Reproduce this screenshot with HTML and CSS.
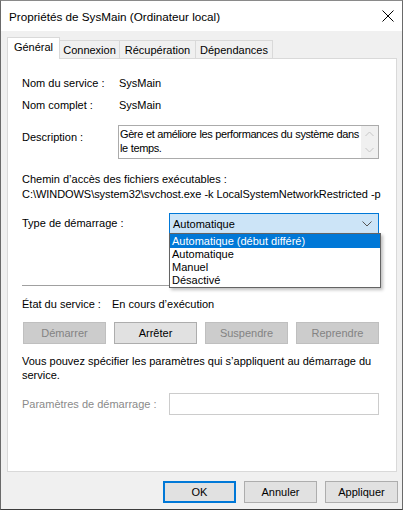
FILE: index.html
```html
<!DOCTYPE html>
<html lang="fr">
<head>
<meta charset="utf-8">
<title>Propriétés de SysMain</title>
<link rel="stylesheet" href="styles.css">
</head>
<body>
<div class="window">
  <div class="titlebar">
    <span class="title">Propriétés de SysMain (Ordinateur local)</span>
    <svg class="close" width="12" height="12" viewBox="0 0 12 12"><path d="M0.5 0.5 L11.5 11.5 M11.5 0.5 L0.5 11.5" stroke="#000" stroke-width="1" fill="none"/></svg>
  </div>
  <div class="client">
    <div class="tabs">
      <div class="tab active t1">Général</div>
      <div class="tab t2">Connexion</div>
      <div class="tab t3">Récupération</div>
      <div class="tab t4">Dépendances</div>
    </div>
    <div class="panel">
      <div class="row r1"><span class="lbl">Nom du service :</span><span class="val">SysMain</span></div>
      <div class="row r2"><span class="lbl">Nom complet :</span><span class="val">SysMain</span></div>
      <div class="row desc">
        <span class="lbl">Description :</span>
        <div class="textarea">
          <div class="ta-text">Gère et améliore les performances du système dans le temps.</div>
          <div class="scroll">
            <svg width="9" height="6" viewBox="0 0 9 6"><path d="M0.5 5 L4.5 1 L8.5 5" stroke="#c6c6c6" fill="none"/></svg>
            <svg width="9" height="6" viewBox="0 0 9 6"><path d="M0.5 1 L4.5 5 L8.5 1" stroke="#c6c6c6" fill="none"/></svg>
          </div>
        </div>
      </div>
      <div class="pathlbl">Chemin d’accès des fichiers exécutables :</div>
      <div class="path">C:\WINDOWS\system32\svchost.exe -k LocalSystemNetworkRestricted -p</div>
      <div class="row type">
        <span class="lbl2">Type de démarrage :</span>
        <div class="combo-wrap">
          <div class="combo">
            <span>Automatique</span>
            <svg width="10" height="6" viewBox="0 0 10 6"><path d="M0.5 0.5 L5 5 L9.5 0.5" stroke="#555" fill="none"/></svg>
          </div>
          <ul class="dropdown">
            <li class="sel">Automatique (début différé)</li>
            <li>Automatique</li>
            <li>Manuel</li>
            <li>Désactivé</li>
          </ul>
        </div>
      </div>
      <div class="sep"></div>
      <div class="row etat"><span class="lbl3">État du service :</span><span>En cours d’exécution</span></div>
      <div class="svc-buttons">
        <button class="btn" disabled>Démarrer</button>
        <button class="btn">Arrêter</button>
        <button class="btn" disabled>Suspendre</button>
        <button class="btn" disabled>Reprendre</button>
      </div>
      <p class="para">Vous pouvez spécifier les paramètres qui s’appliquent au démarrage du service.</p>
      <div class="row params">
        <span class="lbl2 dim">Paramètres de démarrage :</span>
        <div class="input"></div>
      </div>
    </div>
    <div class="footer">
      <button class="btn2 default">OK</button>
      <button class="btn2">Annuler</button>
      <button class="btn2">Appliquer</button>
    </div>
  </div>
</div>
</body>
</html>
```

FILE: styles.css
```css
* { box-sizing: border-box; }
html, body {
  margin: 0;
  padding: 0;
  background: #ffffff;
}
body {
  font-family: "Liberation Sans", Arial, sans-serif;
  font-size: 11px;
  color: #000;
  width: 406px;
  height: 511px;
  overflow: hidden;
}
.window {
  width: 403px;
  height: 510px;
  border: 1px solid #6a6a6a;
  border-top-color: #8a8a8a;
  border-bottom-color: #3c3c3c;
  display: flex;
  flex-direction: column;
  background: #f0f0f0;
}
.titlebar {
  height: 30px;
  background: #ffffff;
  display: flex;
  align-items: center;
  justify-content: space-between;
  padding: 0 7px 0 8px;
}
.title {
  font-size: 11.7px;
}
.close {
  display: block;
  margin-right: 1px;
}
.client {
  flex: 1;
  padding: 6px 4px 0 6px;
  display: flex;
  flex-direction: column;
}
.tabs {
  display: flex;
  align-items: flex-end;
  height: 21px;
  position: relative;
  z-index: 1;
}
.tab {
  height: 18px;
  line-height: 18px;
  text-align: center;
  border: 1px solid #d9d9d9;
  border-bottom: none;
  border-left: none;
  background: #f0f0f0;
  white-space: nowrap;
}
.tab.active {
  height: 22px;
  line-height: 19px;
  background: #fff;
  border-left: 1px solid #d9d9d9;
  margin-bottom: -1px;
}
.t1 { width: 53px; }
.t2 { width: 60px; }
.t3 { width: 76px; }
.t4 { width: 77px; }
.panel {
  width: 390px;
  height: 414px;
  background: #ffffff;
  border: 1px solid #d9d9d9;
  padding: 17px 17px 0 14px;
}
.row {
  display: flex;
  line-height: 14px;
}
.lbl { width: 97px; flex: none; }
.lbl2 { width: 147px; flex: none; }
.lbl3 { width: 90px; flex: none; }
.r2 { margin-top: 8px; }
.desc { margin-top: 13px; }
.desc .lbl { padding-top: 5px; }
.textarea {
  width: 261px;
  height: 34px;
  margin-left: -1px;
  border: 1px solid #ababab;
  display: flex;
}
.ta-text {
  flex: 1;
  padding: 1px 0 0 1px;
  line-height: 14px;
  letter-spacing: -0.4px;
  word-spacing: 0.4px;
}
.scroll {
  width: 17px;
  flex: none;
  background: #f0f0f0;
  display: flex;
  flex-direction: column;
  align-items: center;
  justify-content: space-between;
  padding: 5px 0 5px;
}
.scroll svg { display: block; }
.pathlbl {
  margin-top: 13px;
  line-height: 14px;
}
.path {
  margin-top: 1px;
  line-height: 14px;
  white-space: nowrap;
  letter-spacing: -0.05px;
}
.type { margin-top: 12px; }
.type .lbl2 { padding-top: 3px; }
.combo-wrap {
  position: relative;
  width: 211px;
}
.combo {
  height: 21px;
  border: 1px solid #0078d7;
  background: #cce4f7;
  display: flex;
  align-items: center;
  justify-content: space-between;
  padding: 0 6px 0 3px;
}
.dropdown {
  position: absolute;
  left: 0;
  top: 20px;
  width: 212px;
  margin: 0;
  padding: 0;
  list-style: none;
  background: #fff;
  border: 1px solid #646464;
  box-shadow: 2px 2px 3px rgba(0,0,0,0.25);
  z-index: 5;
}
.dropdown li {
  line-height: 13px;
  padding-left: 2px;
}
.dropdown li.sel {
  background: #0078d7;
  color: #fff;
  line-height: 14px;
}
.sep {
  margin-top: 51px;
  height: 1px;
  background: #a0a0a0;
  width: 357px;
}
.etat { margin-top: 11px; }
.svc-buttons {
  margin-top: 11px;
  display: flex;
  gap: 8px;
  width: 357px;
  padding-left: 1px;
}
.btn, .btn2 {
  font: inherit;
  height: 22px;
  border: 1px solid #adadad;
  background: #e1e1e1;
  color: #000;
  padding: 0;
  margin: 0;
}
.btn { width: 83px; }
.btn[disabled] {
  background: #cccccc;
  border-color: #bfbfbf;
  color: #838383;
}
.para {
  margin: 10px 0 0;
  line-height: 14px;
}
.params { margin-top: 11px; }
.params .lbl2 { padding-top: 4px; }
.dim { color: #8a8a8a; }
.input {
  width: 211px;
  height: 22px;
  border: 1px solid #cccccc;
  background: #fff;
}
.footer {
  display: flex;
  justify-content: flex-end;
  gap: 8px;
  margin-top: 9px;
}
.btn2 {
  width: 73px;
}
.btn2.default {
  border: 2px solid #0078d7;
}
```
